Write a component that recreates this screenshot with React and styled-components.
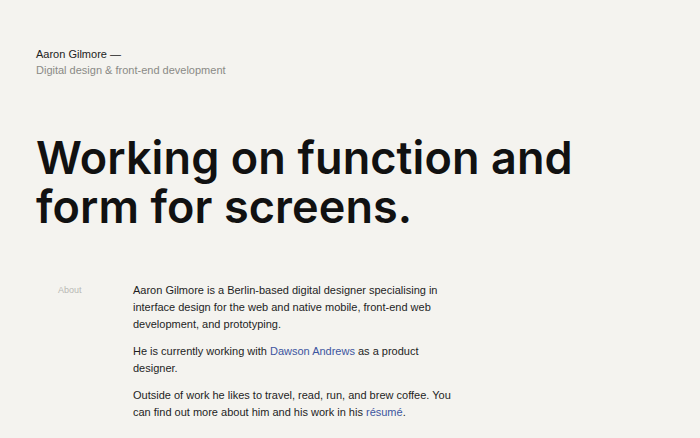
import React from 'react';
import styled, { createGlobalStyle } from 'styled-components';

const GlobalStyle = createGlobalStyle`
  html, body {
    margin: 0;
    padding: 0;
    background: #f4f3ef;
  }
  body {
    font-family: "Liberation Sans", Arial, sans-serif;
    color: #1a1a1a;
  }
`;

const Page = styled.div`
  padding: 46px 36px 0;
`;

const Header = styled.header`
  font-size: 11px;
  line-height: 16px;
`;

const Name = styled.div`
  color: #222;
`;

const Tagline = styled.div`
  color: #8a8a86;
`;

const Hero = styled.h1`
  margin: 55px 0 0;
  font-family: Inter, "Liberation Sans", sans-serif;
  font-weight: 600;
  font-size: 45px;
  line-height: 49px;
  letter-spacing: 0.1px;
  color: #111;
`;

const Section = styled.section`
  display: grid;
  grid-template-columns: 97px 326px;
  margin-top: 51px;
`;

const Label = styled.div`
  padding-left: 22px;
  font-size: 9px;
  line-height: 17px;
  color: #b8b8b4;
`;

const Body = styled.div`
  font-size: 11px;
  line-height: 17px;
  color: #1e1e1e;
`;

const Para = styled.p`
  margin: 0 0 10px;
`;

const Link = styled.a`
  color: #3c55a0;
  text-decoration: none;
`;

export default function App() {
  return (
    <>
      <GlobalStyle />
      <Page>
        <Header>
          <Name>Aaron Gilmore —</Name>
          <Tagline>Digital design &amp; front-end development</Tagline>
        </Header>
        <Hero>
          Working on function and
          <br />
          form for screens.
        </Hero>
        <Section>
          <Label>About</Label>
          <Body>
            <Para>
              Aaron Gilmore is a Berlin-based digital designer specialising in
              interface design for the web and native mobile, front-end web
              development, and prototyping.
            </Para>
            <Para>
              He is currently working with <Link href="#">Dawson Andrews</Link> as
              a product designer.
            </Para>
            <Para>
              Outside of work he likes to travel, read, run, and brew coffee. You
              can find out more about him and his work in his{' '}
              <Link href="#">résumé</Link>.
            </Para>
          </Body>
        </Section>
      </Page>
    </>
  );
}
